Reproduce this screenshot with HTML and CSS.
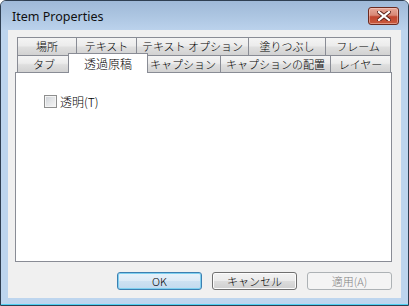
FILE: index.html
```html
<!DOCTYPE html>
<html lang="ja">
<head>
<meta charset="utf-8">
<link rel="stylesheet" href="styles.css">
</head>
<body>
<div class="window">
  <div class="titlebar">
    <span class="title">Item Properties</span>
    <button class="close" aria-label="Close">
      <svg width="14" height="10" viewBox="0 0 14 10">
        <path d="M2 1 L12 9 M12 1 L2 9" stroke="#5a2018" stroke-width="4" stroke-linecap="square"/>
        <path d="M2 1 L12 9 M12 1 L2 9" stroke="#ffffff" stroke-width="2.2" stroke-linecap="square"/>
      </svg>
    </button>
  </div>
  <div class="client">
    <div class="tabctl">
      <div class="row row-back">
        <div class="tab w59">場所</div>
        <div class="tab w60">テキスト</div>
        <div class="tab w112">テキスト オプション</div>
        <div class="tab w77">塗りつぶし</div>
        <div class="tab w65">フレーム</div>
      </div>
      <div class="row row-front">
        <div class="tab w53">タブ</div>
        <div class="tab w75 selected">透過原稿</div>
        <div class="tab w75">キャプション</div>
        <div class="tab w110">キャプションの配置</div>
        <div class="tab w60">レイヤー</div>
      </div>
      <div class="panel">
        <label class="check">
          <span class="box"></span>
          <span class="label">透明(T)</span>
        </label>
      </div>
    </div>
    <div class="buttons">
      <button class="btn default">OK</button>
      <button class="btn">キャンセル</button>
      <button class="btn disabled">適用(A)</button>
    </div>
  </div>
</div>
</body>
</html>
```
FILE: styles.css
```css
html, body {
  margin: 0;
  padding: 0;
  background: #ffffff;
}
body {
  font-family: "Noto Sans CJK JP", "Noto Sans", sans-serif;
  font-weight: 300;
}
.window {
  box-sizing: border-box;
  width: 409px;
  height: 306px;
  border: 1px solid #2f3f52;
  border-radius: 6px 6px 0 0;
  background: #bdd5ee;
  box-shadow: inset 0 -1px 0 #4fd0f2;
  display: flex;
  flex-direction: column;
}
.titlebar {
  height: 29px;
  display: flex;
  align-items: center;
  justify-content: space-between;
  padding: 0 9px 0 11px;
  border-radius: 5px 5px 0 0;
  background: linear-gradient(to bottom, #9fb9d8 0%, #acc5e1 50%, #bbd2ec 100%);
}
.title {
  font-family: "Noto Sans", "Open Sans", sans-serif;
  font-weight: 400;
  font-size: 12.5px;
  color: #101010;
  margin-top: 1px;
}
.close {
  width: 31px;
  height: 18px;
  padding: 0;
  border: 1px solid #6b2a20;
  border-radius: 3px;
  background: linear-gradient(to bottom, #e6a899 0%, #d88876 45%, #c1452f 55%, #c95a3e 100%);
  box-shadow: inset 0 0 0 1px rgba(255, 220, 210, 0.45);
  display: flex;
  align-items: center;
  justify-content: center;
}
.client {
  flex: 1;
  margin: 0 7px 7px 7px;
  background: #f0f0f0;
  display: flex;
  flex-direction: column;
  padding: 7px 9px 0 7px;
}
.tabctl {
  display: flex;
  flex-direction: column;
}
.row {
  display: flex;
  margin-left: 2px;
}
.row-back {
  height: 18px;
}
.row-front {
  height: 17px;
}
.tab {
  box-sizing: border-box;
  border: 1px solid #898c95;
  border-bottom: none;
  margin-right: -1px;
  background: linear-gradient(to bottom, #f4f4f4 0%, #ececec 45%, #dedede 55%, #d2d2d2 100%);
  font-size: 11px;
  line-height: 16px;
  text-align: center;
  color: #000;
  white-space: nowrap;
}
.row-back .tab {
  border-bottom: 1px solid #898c95;
  margin-bottom: -1px;
}
.w53 { width: 54px; }
.w59 { width: 60px; }
.w60 { width: 61px; }
.w65 { width: 66px; }
.w75 { width: 76px; }
.w77 { width: 78px; }
.w110 { width: 111px; }
.w112 { width: 113px; }
.tab.selected {
  position: relative;
  z-index: 2;
  background: #ffffff;
  height: 20px;
  margin-top: -2px;
  margin-left: -2px;
  margin-right: -3px;
  width: 80px;
  line-height: 19px;
  font-size: 12px;
}
.panel {
  box-sizing: border-box;
  position: relative;
  z-index: 1;
  height: 190px;
  border: 1px solid #898c95;
  background: #ffffff;
  padding: 22px 28px;
}
.check {
  display: flex;
  align-items: center;
  gap: 3px;
  font-size: 12px;
  color: #000;
}
.box {
  box-sizing: border-box;
  width: 13px;
  height: 13px;
  border: 1px solid #8e8f8f;
  background: linear-gradient(135deg, #cbcfd5 0%, #e4e6e8 50%, #f6f6f6 100%);
  box-shadow: inset 0 0 0 1px #f4f4f4;
}
.label {
  line-height: 13px;
}
.buttons {
  display: flex;
  justify-content: flex-end;
  gap: 10px;
  margin-top: 10px;
}
.btn {
  box-sizing: border-box;
  width: 85px;
  height: 18px;
  padding: 0;
  border: 1px solid #707070;
  border-radius: 3px;
  font-family: "Noto Sans CJK JP", "Noto Sans", sans-serif;
  font-weight: 300;
  font-size: 11px;
  line-height: 14px;
  color: #000;
  background: linear-gradient(to bottom, #f2f2f2 0%, #ebebeb 50%, #dddddd 50%, #cfcfcf 100%);
  box-shadow: inset 0 0 0 1px #fcfcfc;
}
.btn.default {
  border-color: #3c7fb1;
  background: linear-gradient(to bottom, #e8f2fb 0%, #dceaf6 50%, #cde1f2 50%, #c2daef 100%);
  box-shadow: inset 0 0 0 1px #7fd0f0;
}
.btn.disabled {
  border-color: #adb2b5;
  background: #f4f4f4;
  color: #838383;
  box-shadow: none;
}
```
